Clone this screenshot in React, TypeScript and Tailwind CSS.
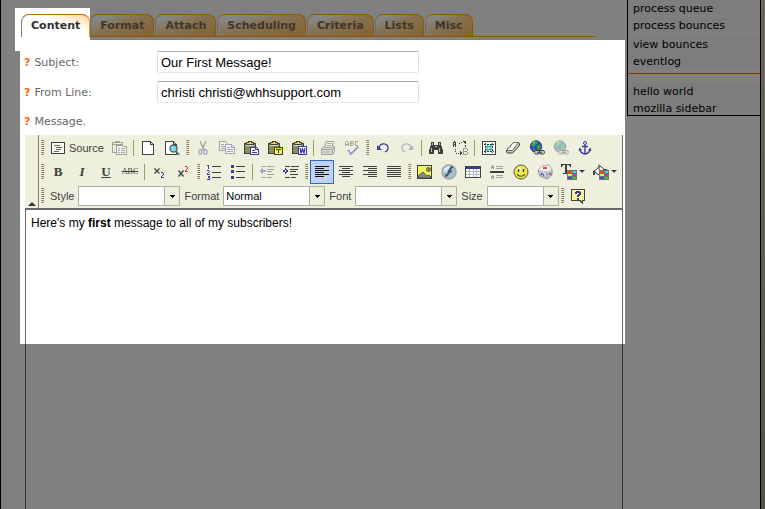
import type { ReactNode } from "react";

const INK = "#404040";
const NAVY = "#3a3a9c";
const FADED = "#a3a39b";

function Icon({ children, w = 16, smooth = false }: { children: ReactNode; w?: number; smooth?: boolean }) {
  return (
    <svg width={w} height={16} viewBox={`0 0 ${w} 16`} fill="none" shapeRendering={smooth ? "auto" : "crispEdges"} aria-hidden="true" className="block shrink-0">
      {children}
    </svg>
  );
}

function Tool({ label, children, pressed = false }: { label: string; children: ReactNode; pressed?: boolean }) {
  return (
    <button
      type="button"
      aria-label={label}
      aria-pressed={pressed}
      className={
        pressed
          ? "flex h-6 w-6 shrink-0 items-center justify-center border border-[#316ac5] bg-[#c1d2ee]"
          : "flex h-6 w-6 shrink-0 items-center justify-center"
      }
    >
      {children}
    </button>
  );
}

function DropTool({ label, children }: { label: string; children: ReactNode }) {
  return (
    <button type="button" aria-label={label} className="flex h-6 w-8 shrink-0 items-center gap-[2px] pl-1">
      {children}
      <svg width="6" height="4" viewBox="0 0 6 4" aria-hidden="true" className="shrink-0">
        <path d="M0 0h6L3 3z" fill={INK} />
      </svg>
    </button>
  );
}

function Grip() {
  return (
    <span className="flex h-6 w-[7px] shrink-0 items-center pl-[2px]">
      <svg width="3" height="16" viewBox="0 0 3 16" shapeRendering="crispEdges" aria-hidden="true">
        {[0, 2, 4, 6, 8, 10, 12, 14].map((y) => (
          <g key={y}>
            <path d={`M0 ${y + 0.5}h2`} stroke="#b5a98a" />
            <path d={`M1 ${y + 0.5}h2`} stroke="#82765a" />
          </g>
        ))}
      </svg>
    </span>
  );
}

function Separator() {
  return (
    <span className="flex h-6 w-[5px] shrink-0 items-center pl-[2px]">
      <span className="h-4 w-px bg-[#9c9c63]" />
    </span>
  );
}

function Lines({ rows, color = INK }: { rows: [number, number, number][]; color?: string }) {
  return (
    <>
      {rows.map(([x, y, w]) => (
        <path key={`${x}-${y}`} d={`M${x} ${y + 0.5}h${w}`} stroke={color} />
      ))}
    </>
  );
}

function Clipboard() {
  return (
    <>
      <path d="M1 3h12v11H1z" fill="#8b8b5c" />
      <path d="M1.500 3.500h11v10h-11z" stroke={INK} />
      <path d="M3 4h8v2H3z" fill="#d8d8ce" />
      <path d="M4 2h2V1h3v1h2v2H4z" fill="#f0d84c" />
      <path d="M3.500 4.500v-2h2v-1h3v1h2v2z" stroke={INK} />
    </>
  );
}

function Globe({ faded = false }: { faded?: boolean }) {
  return (
    <g opacity={faded ? 0.4 : 1}>
      <circle cx="7" cy="6.500" r="5.700" fill="#2c49c8" stroke="#30365c" />
      <path d="M3 3l3-2 3 1-1 2-2 1-1 2-3-1zM8 6l3-2 1 3-2 3-2-1zM4 8l2 1v2l-2-1z" fill="#30a83a" />
      <path d="M4 3l2-1" stroke="#b6ecff" />
      <rect x="5.500" y="10.500" width="5" height="3.500" rx="1.500" fill="#d5d5cb" stroke={INK} />
      <rect x="10.500" y="10.500" width="5" height="3.500" rx="1.500" fill="#d5d5cb" stroke={INK} />
      <path d="M8 12.300h5" stroke={INK} />
    </g>
  );
}

function Swatches() {
  return (
    <>
      <path d="M6 6h10v10H6z" fill="#777767" />
      <path d="M7 7h4v2H7z" fill="#e84343" />
      <path d="M12 7h3v2h-3z" fill="#35d9dc" />
      <path d="M7 10h4v2H7z" fill="#eeee39" />
      <path d="M12 10h3v2h-3z" fill="#c633cc" />
      <path d="M7 13h4v2H7z" fill="#3f4cdd" />
      <path d="M12 13h3v2h-3z" fill="#35cc43" />
    </>
  );
}

function TopRow() {
  return (
    <div className="flex h-6 items-center">
      <Grip />
      <button type="button" className="flex h-6 w-[61px] shrink-0 items-center gap-1 pl-[5px]">
        <Icon w={14}>
          <path d="M.5 2.500h13v11H.5z" fill="#fafaf5" stroke={INK} />
          <Lines rows={[[3, 5, 6], [5, 7, 6], [5, 9, 5], [3, 11, 5]]} color="#666660" />
        </Icon>
        Source
      </button>
      <Tool label="Templates">
        <Icon>
          <path d="M1.500 2.500h10v10h-10zM4.500 2.500v-1h4v1M1.500 4.500h10" stroke={FADED} />
          <path d="M5.500 5.500h6l1 1h3v8h-10z" fill="#f4f4ea" stroke={FADED} />
          <path d="M7 8.500h2m1 0h4m-7 2h2m1 0h4m-7 2h2m1 0h4" stroke="#a3a3c4" />
        </Icon>
      </Tool>
      <Separator />
      <Tool label="New page">
        <Icon>
          <path d="M2.500 1.500h8l3 3v10h-11z" fill="#fff" stroke={INK} />
          <path d="M10.500 1.500v3h3" stroke={INK} />
        </Icon>
      </Tool>
      <Tool label="Preview">
        <Icon>
          <path d="M1.500 1.500h8l3 3v10h-11z" fill="#fff" stroke={INK} />
          <path d="M9.500 1.500v3h3" stroke={INK} />
          <g shapeRendering="auto">
            <circle cx="9.500" cy="8.500" r="3.500" fill="#74dce2" stroke="#50595c" strokeWidth="1.300" />
            <path d="M8 8l1.500-1.500" stroke="#fff" />
            <path d="M12 11l3 4" stroke="#54777a" strokeWidth="2" />
          </g>
        </Icon>
      </Tool>
      <Grip />
      <Tool label="Cut">
        <Icon smooth>
          <path d="M5 1l4 9M11 1L7 10" stroke={FADED} strokeWidth="1.300" />
          <ellipse cx="5.500" cy="12" rx="1.500" ry="2.400" stroke="#a3a3c4" strokeWidth="1.200" />
          <ellipse cx="10.500" cy="12" rx="1.500" ry="2.400" stroke="#a3a3c4" strokeWidth="1.200" />
        </Icon>
      </Tool>
      <Tool label="Copy">
        <Icon>
          <path d="M.5 1.500h6l2 2v7h-8z" fill="#f4f4ea" stroke={FADED} />
          <path d="M2 4.500h3m-3 2h4m-4 2h4" stroke={FADED} />
          <path d="M6.500 4.500h6l3 3v6h-9z" fill="#f4f4ea" stroke="#a3a3c4" />
          <path d="M8 7.500h3m-3 2h6m-6 2h6M12.500 4.500v3h3" stroke="#a3a3c4" />
        </Icon>
      </Tool>
      <Tool label="Paste">
        <Icon>
          <Clipboard />
          <path d="M7.500 7.500h6l2 2v5h-8z" fill="#fff" stroke={NAVY} />
          <path d="M9 10.500h3m-3 2h5M12.500 7.500v2h3" stroke={NAVY} />
        </Icon>
      </Tool>
      <Tool label="Paste as plain text">
        <Icon>
          <Clipboard />
          <path d="M7 7h9v8H7z" fill={INK} />
          <path d="M8 8h7v6H8z" fill="#f5ed55" />
          <path d="M9 9h5v1h-2v3h-1v-3H9z" fill={INK} />
        </Icon>
      </Tool>
      <Tool label="Paste from Word">
        <Icon>
          <Clipboard />
          <path d="M7.500 6.500h8v8h-8z" fill="#fff" stroke={NAVY} />
          <path d="M9 8l1 5 1.500-4 1.500 4 1-5" stroke="#2929bb" strokeWidth="1.200" shapeRendering="auto" />
        </Icon>
      </Tool>
      <Separator />
      <Tool label="Print">
        <Icon smooth>
          <path d="M1.500 8.500l2-2h11v5l-2 3h-11z" fill="#deded3" stroke={FADED} />
          <path d="M4.500 7.500L6 1.500h7.500L12 7.500z" fill="#f6f6ee" stroke={FADED} />
          <path d="M7 3.500h4.500m-5 2h4.500" stroke={FADED} />
          <path d="M1 9.500h11.500v5M3 12h7M15 7l-2.500 2.500" stroke={FADED} />
        </Icon>
      </Tool>
      <Tool label="Check spelling">
        <Icon>
          <path d="M1.500 6V2.500l1-1h1l1 1V6M2 4.500h2M6.500 6V1.500h2l1 1-1 1h-2 2l1 1-1 1h-2M14 1.500h-2l-1 1v2l1 1h2" stroke={FADED} />
          <path d="M4 10l3 4 7-7" stroke="#a3a3c8" strokeWidth="2" />
        </Icon>
      </Tool>
      <Grip />
      <Tool label="Undo">
        <Icon smooth>
          <path d="M4 8c1-6 9-5 9 0 0 2-1 3-3 4" stroke={NAVY} strokeWidth="1.300" />
          <path d="M2 5v5h5z" fill={NAVY} />
        </Icon>
      </Tool>
      <Tool label="Redo">
        <Icon smooth>
          <path d="M12 8C11 2 3 3 3 8c0 2 1 3 3 4" stroke="#b2b2cd" strokeWidth="1.300" />
          <path d="M14 5v5H9z" fill="#b2b2cd" />
        </Icon>
      </Tool>
      <Separator />
      <Tool label="Find">
        <Icon>
          <path d="M3 2h3v3h4V2h3v3l2 5v4h-5v-4H6v4H1v-4l2-5z" fill={INK} />
          <path d="M4 3v2m7-2v2M3 8v4m8-4v4M7 6.500h2" stroke="#c2c2b8" />
        </Icon>
      </Tool>
      <Tool label="Replace">
        <Icon>
          <path d="M1 2h1V1h1v1h1v5H3V5H2v2H1zM2 3v1h1V3z" fill={INK} fillRule="evenodd" />
          <path d="M11 8h4v1h1v2h-1v1h1v2h-1v1h-4zm1 1v2h3V9zm0 3v2h3v-2z" fill="#96968e" fillRule="evenodd" />
          <path d="M7 3h1v1H7zM9 2h1v1H9zM3 9h1v1H3zM3 11h1v1H3zM4 13h1v1H4zM6 13h1v1H6z" fill={INK} />
          <path d="M11 1h3v3h-1V3h-1V2h-1zM13 5h1v2h-1zM8 11v4l3-2z" fill={INK} />
        </Icon>
      </Tool>
      <Separator />
      <Tool label="Select all">
        <Icon>
          <path d="M1.500 1.500h13v13h-13z" fill="#fff" stroke={INK} />
          <path d="M4 4h8v8H4z" fill="#9fe0dc" />
          <path d="M6.500 5v6m3-6v6M5 6.500h6m-6 3h6" stroke="#5bb5b3" />
          <path d="M4.500 3v10m7-10v10M3 4.500h10m-10 7h10" stroke={INK} strokeDasharray="2 1" />
        </Icon>
      </Tool>
      <Tool label="Remove format">
        <Icon smooth>
          <path d="M1.500 10.500l7-8h5l1 1v2l-7 7.500h-5l-1-1z" fill="#c9c9bd" stroke={INK} />
          <path d="M1.500 10.500l7-8h5l-6 8z" fill="#fafaf4" stroke="#6d6d67" />
        </Icon>
      </Tool>
      <Tool label="Insert link"><Icon smooth><Globe /></Icon></Tool>
      <Tool label="Remove link"><Icon smooth><Globe faded /></Icon></Tool>
      <Tool label="Insert anchor">
        <Icon smooth>
          <circle cx="8" cy="3" r="1.500" stroke={NAVY} />
          <path d="M8 5v9M5 6.500h6M3 9c0 3 2 4.500 5 5 3-.5 5-2 5-5" stroke={NAVY} strokeWidth="1.400" />
          <path d="M1.500 11l1-3.500L5 10zM14.500 11l-1-3.500L11 10z" fill={NAVY} />
        </Icon>
      </Tool>
    </div>
  );
}

function MiddleRow() {
  return (
    <div className="flex h-6 items-center">
      <Grip />
      <Tool label="Bold"><span className="font-['Liberation_Serif',serif] text-[13px] font-bold">B</span></Tool>
      <Tool label="Italic"><span className="font-['Liberation_Serif',serif] text-[13px] font-bold italic">I</span></Tool>
      <Tool label="Underline"><span className="font-['Liberation_Serif',serif] text-[13px] font-bold underline">U</span></Tool>
      <Tool label="Strike through"><span className="font-['Liberation_Serif',serif] text-[8px] line-through">ABC</span></Tool>
      <Separator />
      <Tool label="Subscript">
        <Icon>
          <path d="M3.500 4.500l5 5M8.500 4.500l-5 5" stroke={INK} strokeWidth="1.300" shapeRendering="auto" />
          <path d="M10 8h2v1h1v2h-1v1h-1v1h2v1h-3v-2h1v-1h1V9h-2z" fill={NAVY} />
        </Icon>
      </Tool>
      <Tool label="Superscript">
        <Icon>
          <path d="M3.500 6.500l5 6M8.500 6.500l-5 6" stroke={INK} strokeWidth="1.300" shapeRendering="auto" />
          <path d="M10 2h2v1h1v2h-1v1h-1v1h2v1h-3V6h1V5h1V3h-2z" fill="#b83434" />
        </Icon>
      </Tool>
      <Grip />
      <Tool label="Numbered list">
        <Icon>
          <path d="M1 1h2v4H2V2H1zM1 6h2v1h1v1H3v1H2v1h2v1H1V9h1V8h1V7H1zM1 12h3v4H1v-1h2v-1H2v-1h1z" fill={NAVY} />
          <Lines rows={[[6, 2, 9], [6, 8, 9], [6, 13, 9]]} />
        </Icon>
      </Tool>
      <Tool label="Bulleted list">
        <Icon>
          <path d="M1 1h3v3H1zm0 5h3v3H1zm0 6h3v3H1z" fill={NAVY} />
          <Lines rows={[[6, 2, 9], [6, 7, 9], [6, 13, 9]]} />
        </Icon>
      </Tool>
      <Separator />
      <Tool label="Decrease indent">
        <Icon>
          <Lines rows={[[2, 2, 5], [8, 2, 7], [8, 5, 7], [8, 7, 5], [8, 10, 7], [2, 13, 5], [8, 13, 5]]} color={FADED} />
          <path d="M0 7l4-3v6zM4 6h3v2H4z" fill="#a3a3c8" />
        </Icon>
      </Tool>
      <Tool label="Increase indent">
        <Icon>
          <Lines rows={[[2, 2, 5], [8, 2, 8], [7, 5, 8], [7, 7, 6], [7, 10, 8], [2, 13, 5], [8, 13, 5]]} />
          <path d="M6 7L2 4v6zM0 6h3v2H0z" fill={NAVY} />
        </Icon>
      </Tool>
      <Grip />
      <Tool label="Align left" pressed>
        <Icon><Lines rows={[[1, 2, 14], [1, 4, 9], [1, 6, 14], [1, 8, 9], [1, 10, 14], [1, 12, 9]]} color="#111111" /></Icon>
      </Tool>
      <Tool label="Align center">
        <Icon><Lines rows={[[1, 2, 14], [4, 4, 8], [1, 6, 14], [4, 8, 8], [1, 10, 14], [4, 12, 8]]} /></Icon>
      </Tool>
      <Tool label="Align right">
        <Icon><Lines rows={[[1, 2, 14], [6, 4, 9], [1, 6, 14], [6, 8, 9], [1, 10, 14], [6, 12, 9]]} /></Icon>
      </Tool>
      <Tool label="Justify">
        <Icon><Lines rows={[[1, 2, 14], [1, 4, 14], [1, 6, 14], [1, 8, 14], [1, 10, 14], [1, 12, 14]]} /></Icon>
      </Tool>
      <Grip />
      <Tool label="Insert image">
        <Icon>
          <path d="M0 1h15v14H0z" fill={INK} />
          <path d="M1 2h13v12H1z" fill="#f8f260" />
          <path d="M10 3h3v1h1v3h-1v1h-3V7H9V4h1z" fill="#8b8340" />
          <g shapeRendering="auto">
            <path d="M1 14v-2l5-4 4 4 2-1 2 2v1z" fill="#8b8b83" stroke={INK} strokeWidth=".8" />
          </g>
        </Icon>
      </Tool>
      <Tool label="Insert Flash">
        <Icon smooth>
          <circle cx="8" cy="8" r="7" fill="#a9bfd0" stroke="#9fa9ae" strokeWidth="1.500" />
          <path d="M3 5c2-3 6-4 9-1-4 0-6 2-9 5z" fill="#e1edf3" />
          <path d="M12 3c-3 0-3 2-4 5-1 3-2 4-4 4M7 7.500h4" stroke="#3f5669" strokeWidth="2" />
        </Icon>
      </Tool>
      <Tool label="Insert table">
        <Icon>
          <path d="M.5 2.500h15v11H.5z" fill="#fff" stroke={INK} />
          <path d="M1 3h14v2H1z" fill={NAVY} />
          <path d="M4.500 5v8m4-8v8m3-8v8M1 7.500h14m-14 3h14" stroke="#b4b4bd" />
        </Icon>
      </Tool>
      <Tool label="Insert horizontal line">
        <Icon>
          <path d="M2 2h1V1h1v1h1v3H4V4H3v1H2zM2 12h1v-1h1v1h1v3H4v-1H3v1H2z" fill={FADED} />
          <Lines rows={[[7, 2, 7], [7, 4, 7], [7, 11, 7], [7, 13, 7]]} color={FADED} />
          <path d="M1 7h14v2H1z" fill={INK} />
        </Icon>
      </Tool>
      <Tool label="Insert smiley">
        <Icon smooth>
          <circle cx="8" cy="8" r="7" fill="#eeea4a" stroke="#565640" />
          <circle cx="6" cy="5" r="2" fill="#fafac2" />
          <path d="M5.500 5v3m5-3v3" stroke={INK} strokeWidth="1.500" />
          <path d="M4 10c2 3 6 3 8 0" stroke={INK} strokeWidth="1.200" />
        </Icon>
      </Tool>
      <Tool label="Insert special character">
        <Icon smooth>
          <path d="M1 6l4-4 7-1 3 5v5l-5 4-7-3z" fill="#cfcfd8" stroke="#909096" />
          <path d="M1 6l4-4 7-1 3 5-5 2z" fill="#f4f4f8" stroke="#a9a9af" strokeWidth=".6" />
          <path d="M10 8v7" stroke="#909096" />
          <path d="M6 3h4v2H6z" fill="#de4540" />
          <path d="M4 9l2 1 1 2.500M3.500 11.500L5 10" stroke="#3945cf" />
          <path d="M11.500 10h3M13 8.500v3" stroke="#a13c8d" />
        </Icon>
      </Tool>
      <DropTool label="Text color">
        <Icon><path d="M0 0h10v3H9L8 1H6v8h2v1H2V9h2V1H2L1 3H0z" fill={INK} /><Swatches /></Icon>
      </DropTool>
      <DropTool label="Background color">
        <Icon smooth>
          <path d="M1.500 7l5.500-5 5 4-5 5-3-1z" fill="#fafaf5" stroke={INK} />
          <path d="M6 .5V6" stroke={INK} />
          <path d="M0 7l2-1v5H0zM10 5l4 0 1 2h-5z" fill={INK} />
          <Swatches />
        </Icon>
      </DropTool>
    </div>
  );
}

function Picker({ id, label, value, narrow = false }: { id: string; label: string; value: string; narrow?: boolean }) {
  return (
    <div className="flex shrink-0 items-center gap-1 pl-1">
      <label htmlFor={id} className="whitespace-nowrap">{label}</label>
      <span className="relative flex">
        <select
          id={id}
          defaultValue={value}
          className={
            narrow
              ? "h-5 w-[72px] appearance-none border border-[#b0b0a0] bg-white px-[2px] text-black"
              : "h-5 w-[102px] appearance-none border border-[#b0b0a0] bg-white px-[2px] text-black"
          }
        >
          <option value={value}>{value}</option>
        </select>
        <span className="pointer-events-none absolute inset-y-px right-px flex w-[15px] items-center justify-center border-l border-[#b0b0a0] bg-[#efefde]">
          <svg width="5" height="3" viewBox="0 0 5 3" shapeRendering="crispEdges" aria-hidden="true"><path d="M0 0h5v1H4v1H3v1H2V2H1V1H0z" fill="#000" /></svg>
        </span>
      </span>
    </div>
  );
}

function BottomRow() {
  return (
    <div className="flex h-6 items-center">
      <Grip />
      <Picker id="style" label="Style" value="" />
      <Picker id="format" label="Format" value="Normal" />
      <Picker id="font" label="Font" value="" />
      <Picker id="size" label="Size" value="" narrow />
      <Grip />
      <Tool label="About the editor">
        <Icon>
          <path d="M1 1h14v12h-2v3h-1l-3-3H1z" fill={INK} />
          <path d="M2 2h12v10h-2v2l-2-2H2z" fill="#f9f59a" />
          <path d="M5 4h1V3h4v1h1v3h-1v1H9v1H7V7h1V6h1V5H7v1H5zM7 10h2v2H7z" fill={NAVY} />
        </Icon>
      </Tool>
    </div>
  );
}

const tabs = ["Format", "Attach", "Scheduling", "Criteria", "Lists", "Misc"];

function Tabs() {
  return (
    <nav aria-label="Message sections" className="ml-[14px] flex h-10 pt-2 font-['DejaVu_Sans',Verdana,sans-serif] text-[11px] font-bold">
      <div className="flex h-8 bg-white pt-[6px] pl-[6px]">
        <a href="#content" aria-current="page" className="flex h-[23px] items-center rounded-t-lg border-t border-r border-l border-t-[#b36b00] border-r-[#f59b17] border-l-[#8a8279] bg-linear-to-tr from-white from-60% to-[#ffd79c] px-[9px] text-[#333]">
          Content
        </a>
      </div>
      <div className="mr-[31px] flex h-[29px] flex-1 items-end border-b border-[#925600]">
        {tabs.map((tab) => (
          <a key={tab} href={`#${tab.toLowerCase()}`} className="mr-px flex h-[22px] items-center rounded-t-lg border-t border-r border-l border-t-[#925600] border-r-[#925600] border-l-[#6f695f] bg-linear-to-br from-[#868686] from-15% via-[#867152] via-45% to-[#84622e] px-[9px] pt-px text-[#40362b]">
            {tab}
          </a>
        ))}
      </div>
    </nav>
  );
}

function Field({ id, label, value }: { id: string; label: string; value: string }) {
  return (
    <div className="flex h-[22px] items-center">
      <label htmlFor={id} className="flex w-[133px] shrink-0 gap-1 pt-[3px]">
        <b className="text-[#ff6600]">?</b>
        {label}
      </label>
      <input id={id} type="text" defaultValue={value} className="h-[22px] w-[262px] rounded-xs border border-t-[#abadb3] border-r-[#dbdfe6] border-b-[#e3e9ef] border-l-[#dbdfe6] bg-white px-[3px] font-['Liberation_Sans',Arial,sans-serif] text-[13px] text-black" />
    </div>
  );
}

function Editor() {
  return (
    <section aria-label="Message editor" className="mt-px mr-[2px] ml-[5px] border-r border-[#696969]">
      <div className="flex h-[75px] border-b-2 border-[#696969] bg-[#efefde] font-['Liberation_Sans',Arial,sans-serif] text-[11px] text-[#404040]">
        <button type="button" aria-label="Collapse toolbar" className="flex w-[14px] shrink-0 items-end justify-end border-r border-[#808080] pr-[2px] pb-[2px]">
          <svg width="8" height="4" viewBox="0 0 8 4" aria-hidden="true"><path d="M0 4h8L4 0z" fill="#403030" /></svg>
        </button>
        <div role="toolbar" aria-label="Formatting" className="pt-px">
          <TopRow />
          <MiddleRow />
          <BottomRow />
        </div>
      </div>
      <div role="textbox" aria-label="Message" aria-multiline="true" contentEditable suppressContentEditableWarning className="h-[134px] border-l border-[#696969] px-[5px] pt-[5px] font-['Liberation_Sans',Arial,sans-serif] text-xs text-black outline-none">
        Here's my <b>first</b> message to all of my subscribers!
      </div>
    </section>
  );
}

function Sidebar() {
  const item = "flex h-[15px] items-center bg-[#7d7d7d] pt-[3px] pl-[5px]";
  return (
    <aside className="w-[134px] shrink-0 border-r border-black font-['DejaVu_Sans',Verdana,sans-serif] text-[11px] text-black">
      <nav aria-label="Tools" className="border-b border-l border-black">
        <div className="flex flex-col gap-[2px]">
          <a href="#queue" className={item}>process queue</a>
          <a href="#bounces" className={item}>process bounces</a>
        </div>
        <div className="mt-1 flex flex-col gap-[2px]">
          <a href="#view" className={item}>view bounces</a>
          <a href="#eventlog" className={item}>eventlog</a>
        </div>
        <hr className="mt-[5px] mb-2 border-t border-b border-t-[#6b3d00] border-b-[#967c55]" />
        <div className="flex flex-col gap-[2px]">
          <a href="#hello" className={item}>hello world</a>
          <a href="#mozilla" className={item}>mozilla sidebar</a>
        </div>
      </nav>
    </aside>
  );
}

export default function App() {
  return (
    <div className="flex min-h-screen border-l border-black bg-[#808080]">
      <main className="flex min-w-0 flex-1 flex-col">
        <Tabs />
        <form onSubmit={(e) => e.preventDefault()} className="relative mr-[2px] ml-[19px] bg-white pt-[11px] font-['DejaVu_Sans',Verdana,sans-serif] text-[11px] text-[#666]">
          <span className="absolute top-0 -left-[5px] h-[11px] w-[5px] bg-white" />
          <div className="flex flex-col gap-2 pl-1">
            <Field id="subject" label="Subject:" value="Our First Message!" />
            <Field id="from" label="From Line:" value="christi christi@whhsupport.com" />
            <div className="flex h-[23px] items-center gap-1">
              <b className="text-[#ff6600]">?</b>
              Message.
            </div>
          </div>
          <Editor />
        </form>
        <div className="mr-1 ml-6 flex-1 border-x border-[#353535]" />
      </main>
      <Sidebar />
      <div className="w-1 shrink-0 bg-linear-to-b from-[#6b655f] to-[#53534e]" />
    </div>
  );
}
